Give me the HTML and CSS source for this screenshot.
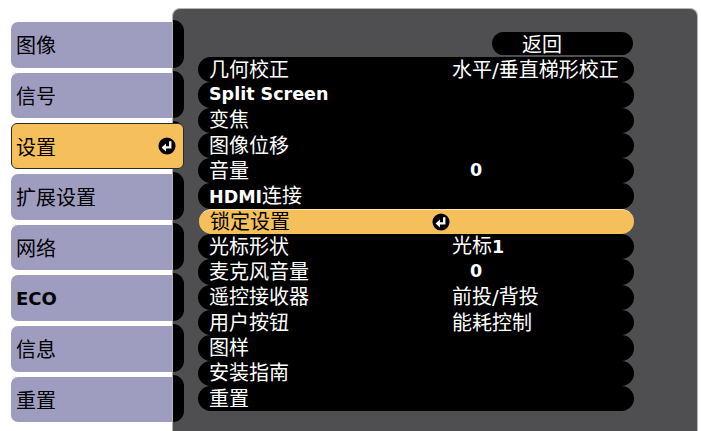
FILE: index.html
```html
<!DOCTYPE html>
<html lang="zh-CN">
<head>
    <meta charset="UTF-8">
    <meta name="viewport" content="width=device-width, initial-scale=1.0">
    <title>设置</title>
    <link rel="stylesheet" href="styles.css">
</head>
<body>
    <div class="screen">
        <nav class="tabs">
            <div class="tab">图像</div>
            <div class="tab">信号</div>
            <div class="tab active">设置
                <svg class="enter" viewBox="0 0 20 20"><circle cx="10" cy="10" r="9.5" fill="#000"/><path d="M13.6 4.8V11.6H8.2" fill="none" stroke="#fff" stroke-width="2.6"/><polygon points="4,11.6 8.8,7.2 8.8,16" fill="#fff"/></svg>
            </div>
            <div class="tab">扩展设置</div>
            <div class="tab">网络</div>
            <div class="tab latin">ECO</div>
            <div class="tab">信息</div>
            <div class="tab">重置</div>
        </nav>

        <section class="panel">
            <div class="bumps">
                <span></span><span></span><span></span><span></span>
                <span></span><span></span><span></span><span></span>
            </div>
            <div class="menu">
                <div class="back">返回</div>
                <div class="rows">
                    <div class="row"><span>几何校正</span><span></span><span>水平/垂直梯形校正</span></div>
                    <div class="row"><span class="b">Split Screen</span><span></span><span></span></div>
                    <div class="row"><span>变焦</span><span></span><span></span></div>
                    <div class="row"><span>图像位移</span><span></span><span></span></div>
                    <div class="row"><span>音量</span><span></span><span class="b num">0</span></div>
                    <div class="row"><span><span class="b">HDMI</span>连接</span><span></span><span></span></div>
                    <div class="row selected"><span>锁定设置</span>
                        <svg class="enter" viewBox="0 0 20 20"><circle cx="10" cy="10" r="9.5" fill="#000"/><path d="M13.6 4.8V11.6H8.2" fill="none" stroke="#fff" stroke-width="2.6"/><polygon points="4,11.6 8.8,7.2 8.8,16" fill="#fff"/></svg>
                        <span></span></div>
                    <div class="row"><span>光标形状</span><span></span><span>光标<span class="b">1</span></span></div>
                    <div class="row"><span>麦克风音量</span><span></span><span class="b num">0</span></div>
                    <div class="row"><span>遥控接收器</span><span></span><span>前投/背投</span></div>
                    <div class="row"><span>用户按钮</span><span></span><span>能耗控制</span></div>
                    <div class="row"><span>图样</span><span></span><span></span></div>
                    <div class="row"><span>安装指南</span><span></span><span></span></div>
                    <div class="row"><span>重置</span><span></span><span></span></div>
                </div>
            </div>
        </section>
    </div>
</body>
</html>
```

FILE: styles.css
```css
body {
    margin: 0;
    background: #fff;
    font-family: "DejaVu Sans", "Noto Sans CJK SC", sans-serif;
    font-size: 20px;
}
.screen {
    display: flex;
    height: 431px;
    padding: 8px 0 0 11px;
    box-sizing: border-box;
    overflow: hidden;
}
.tabs {
    width: 161px;
    flex-shrink: 0;
    display: flex;
    flex-direction: column;
    gap: 5.2px;
    padding-top: 14px;
}
.tab {
    height: 45.5px;
    flex-shrink: 0;
    display: flex;
    align-items: center;
    padding-left: 5px;
    background: #9f9dbf;
    border-radius: 7px 0 0 7px;
    color: #000;
    font-family: "Noto Sans CJK SC", sans-serif;
    box-sizing: border-box;
}
.tab.latin {
    font-family: "DejaVu Sans", sans-serif;
    font-weight: bold;
    font-size: 18px;
}
.tab.active {
    position: relative;
    z-index: 1;
    width: 173px;
    padding-left: 4px;
    padding-right: 7px;
    justify-content: space-between;
    background: #f5c05b;
    border: 1px solid #2a2a2a;
    border-radius: 6px;
}
.enter {
    width: 18px;
    height: 18px;
}
.panel {
    width: 526px;
    flex-shrink: 0;
    display: flex;
    background: #4f4f51;
    border: 1px solid #b4b4b4;
    border-bottom: none;
    border-radius: 8px 8px 0 0;
    box-sizing: border-box;
}
.bumps {
    width: 11px;
    display: flex;
    flex-direction: column;
    gap: 5.2px;
    padding-top: 12px;
}
.bumps span {
    height: 47.5px;
    margin-top: -1px;
    margin-bottom: -1px;
    background: #000;
    border-radius: 0 12px 12px 0;
}
.menu {
    width: 436px;
    margin-left: 14px;
    padding-top: 23px;
}
.back {
    width: 141px;
    height: 23px;
    margin-left: 294px;
    margin-bottom: 2px;
    padding-left: 30px;
    box-sizing: border-box;
    background: #000;
    border-radius: 12px;
    color: #fff;
    line-height: 23px;
    font-family: "Noto Sans CJK SC", sans-serif;
}
.rows {
    display: flex;
    flex-direction: column;
}
.row {
    height: 25.3px;
    display: grid;
    grid-template-columns: 223px 20px 1fr;
    align-items: center;
    padding-left: 11px;
    background: #000;
    color: #fff;
    border-radius: 12.6px;
    line-height: 1;
    white-space: nowrap;
}
.row .b {
    font-family: "DejaVu Sans", sans-serif;
    font-weight: bold;
    font-size: 17.5px;
}
.row .num {
    padding-left: 18px;
}
.row.selected {
    background: #f5c05b;
    color: #000;
    border-top: 1px solid #fbe7bd;
    margin-left: 1px;
    box-sizing: border-box;
}
.row.selected .enter {
    margin-left: -1px;
}
```
